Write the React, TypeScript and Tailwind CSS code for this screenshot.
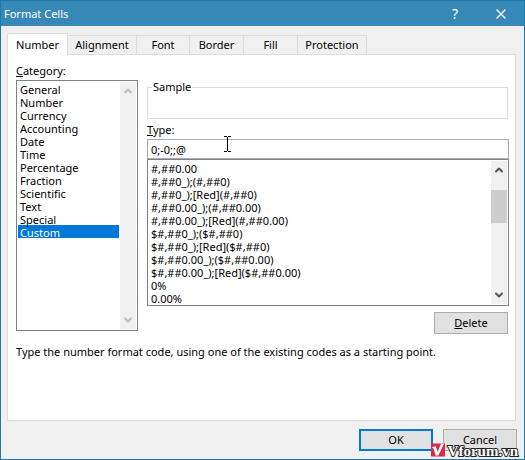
import { ChevronDown, ChevronUp, X } from "lucide-react";
import type { ReactNode } from "react";

const TABS = [
  { name: "Alignment", width: "w-[70px]" },
  { name: "Font", width: "w-[54px]" },
  { name: "Border", width: "w-[55px]" },
  { name: "Fill", width: "w-[55px]" },
  { name: "Protection", width: "w-[70px]" },
];

const CATEGORIES = [
  "General", "Number", "Currency", "Accounting", "Date", "Time",
  "Percentage", "Fraction", "Scientific", "Text", "Special", "Custom",
];

const FORMATS = [
  "#,##0.00",
  "#,##0_);(#,##0)",
  "#,##0_);[Red](#,##0)",
  "#,##0.00_);(#,##0.00)",
  "#,##0.00_);[Red](#,##0.00)",
  "$#,##0_);($#,##0)",
  "$#,##0_);[Red]($#,##0)",
  "$#,##0.00_);($#,##0.00)",
  "$#,##0.00_);[Red]($#,##0.00)",
  "0%",
  "0.00%",
];

function ListBox({ id, label, items, selected, height, arrow, children }: {
  id: string; label?: string; items: string[]; selected?: string; height: string; arrow: string; children?: ReactNode;
}) {
  return (
    <div className={`flex border border-[#7a808c] bg-white p-px ${height}`}>
      <select
        id={id}
        aria-label={label}
        size={items.length}
        defaultValue={selected}
        className="min-w-0 flex-1 overflow-hidden bg-white [scrollbar-width:none]"
      >
        {items.map((item) => (
          <option
            key={item}
            value={item}
            className="h-[13px] min-h-0 px-0.5 py-0 leading-[11px] checked:bg-[linear-gradient(#0078d7,#0078d7)] checked:[-webkit-text-fill-color:white]"
          >
            {item}
          </option>
        ))}
      </select>
      <div className={`ml-px flex w-4 flex-col items-center justify-between bg-[#f0f0f0] py-[3px] ${arrow}`}>
        <ChevronUp size={12} strokeWidth={4} />
        {children}
        <ChevronDown size={12} strokeWidth={4} />
      </div>
    </div>
  );
}

export default function App() {
  return (
    <div className="relative flex min-h-screen flex-col border border-[#1a7aae] bg-[#f0f0f0] font-['Noto_Sans',sans-serif] text-[11px] leading-[14px] text-black">
      <header className="flex h-[25px] items-center bg-[#3788b6] pl-[3px] pr-[15px] text-white">
        <h1 className="flex-1">Format Cells</h1>
        <button aria-label="Help" className="mr-[30px] w-4 text-sm">?</button>
        <button aria-label="Close"><X size={16} strokeWidth={2} /></button>
      </header>

      <nav role="tablist" className="mt-[7px] flex items-end pl-1.5">
        <button role="tab" aria-selected="true" className="relative z-10 -mb-px h-[22px] w-[61px] border border-b-0 border-[#dcdcdc] bg-white">
          Number
        </button>
        {TABS.map((tab) => (
          <button key={tab.name} role="tab" aria-selected="false" className={`-ml-px h-[19px] border border-b-0 border-[#dcdcdc] ${tab.width}`}>
            {tab.name}
          </button>
        ))}
      </nav>

      <main className="ml-1.5 mr-2 flex-1 border border-[#dcdcdc] bg-white pl-2 pr-1.5 pt-[9px]">
        <div className="flex gap-[9px]">
          <div className="w-[122px]">
            <label htmlFor="category" className="mb-0.5 block"><u>C</u>ategory:</label>
            <ListBox id="category" items={CATEGORIES} selected="Custom" height="h-[251px]" arrow="text-[#bfbfbf]" />
          </div>
          <div className="flex min-w-0 flex-1 flex-col pt-4">
            <fieldset className="mr-px h-[39px] border border-[#dcdcdc] px-1">
              <legend className="px-px">Sample</legend>
            </fieldset>
            <label htmlFor="type" className="mb-0.5 mt-1 block"><u>T</u>ype:</label>
            <input id="type" defaultValue="0;-0;;@" className="h-5 border border-[#a8abb2] bg-white px-[3px]" />
            <ListBox id="formats" label="Format codes" items={FORMATS} height="h-[147px]" arrow="text-[#555]">
              <div className="mb-auto mt-[14px] h-[33px] w-full bg-[#cdcdcd]" />
            </ListBox>
            <button className="mr-px mt-1.5 h-[22px] w-[74px] self-end border border-[#adadad] bg-[#e1e1e1]"><u>D</u>elete</button>
          </div>
        </div>
        <p className="mt-[11px]">Type the number format code, using one of the existing codes as a starting point.</p>
      </main>

      <footer className="flex justify-end gap-2.5 pb-2 pr-[7px] pt-2">
        <button className="h-[22px] w-[74px] border-2 border-[#0078d7] bg-[#e1e1e1]">OK</button>
        <button className="h-[22px] w-[74px] border border-[#adadad] bg-[#e1e1e1]">Cancel</button>
      </footer>

      <svg aria-hidden="true" className="pointer-events-none absolute left-[223px] top-[135px]" width="8" height="17" fill="none" stroke="black">
        <path d="M0 .5h3M4 .5h3M3.5 1v14M0 15.5h3M4 15.5h3" />
      </svg>

      <div className="absolute bottom-0.5 right-1.5 flex items-end gap-[3px]">
        <svg aria-hidden="true" width="14" height="14" viewBox="0 0 15 14">
          <path d="M0 0h15v14H0z" fill="#d92b4b" />
          <path d="M1 4l4-1 2 6 4-9h3L8 13H5L3 6z" fill="white" />
        </svg>
        <span className="font-['Liberation_Serif',serif] text-[15px] font-bold leading-[12px] text-white [-webkit-text-stroke:2px_#222] [paint-order:stroke_fill]">Vforum.vn</span>
      </div>
    </div>
  );
}
